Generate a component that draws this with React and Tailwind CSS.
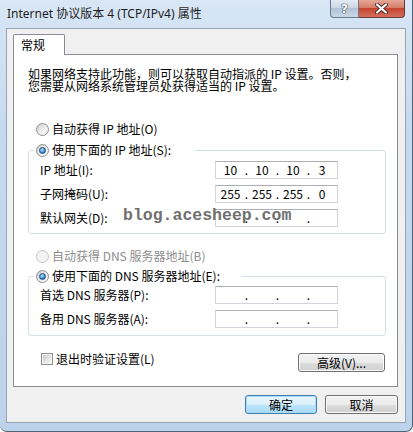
import React from 'react';

function Radio({ checked, disabled }) {
  return (
    <span
      className={`w-[13px] h-[13px] rounded-full border flex items-center justify-center shrink-0 ${
        disabled
          ? 'border-[#c5c5c5] bg-[#f4f4f4]'
          : 'border-[#8e8f8f] bg-[linear-gradient(135deg,#cfcfcf_0%,#f0f0f0_60%,#ffffff_100%)]'
      }`}
    >
      {checked && (
        <span className="w-[7px] h-[7px] rounded-full border border-[#1d4e7e] bg-[radial-gradient(circle_at_40%_35%,#bfe6ff_0%,#3d94dc_55%,#174f88_100%)]" />
      )}
    </span>
  );
}

function IpField({ parts = ['', '', '', ''] }) {
  return (
    <div className="w-[123px] h-[18px] border border-[#d2d6dc] border-t-[#abadb3] bg-white flex items-center pl-[2px] text-[12px] leading-[14px] text-black">
      <span className="w-[25px] text-center">{parts[0]}</span>
      <span className="w-[7px] text-center">.</span>
      <span className="w-[24px] text-center">{parts[1]}</span>
      <span className="w-[7px] text-center">.</span>
      <span className="w-[24px] text-center">{parts[2]}</span>
      <span className="w-[7px] text-center">.</span>
      <span className="w-[20px] text-center">{parts[3]}</span>
    </div>
  );
}

function FieldRow({ label, parts }) {
  return (
    <div className="flex items-center">
      <span className="w-[175px] leading-[14px]">{label}</span>
      <IpField parts={parts} />
    </div>
  );
}

function WinButton({ children, primary, className = '' }) {
  return (
    <div
      className={`h-[19px] rounded-[3px] border flex items-center justify-center text-[12px] leading-[14px] text-black ${
        primary
          ? 'border-[#3c7fb1] shadow-[inset_0_0_0_1px_#a8dcf6] bg-[linear-gradient(180deg,#eaf6fd_0%,#d9f0fc_50%,#bee6fd_51%,#a7d9f5_100%)]'
          : 'border-[#707070] shadow-[inset_0_0_0_1px_#fbfbfb] bg-[linear-gradient(180deg,#f2f2f2_0%,#ebebeb_50%,#dddddd_51%,#cfcfcf_100%)]'
      } ${className}`}
    >
      {children}
    </div>
  );
}

export default function App() {
  return (
    <div className="w-[413px] h-[432px] flex flex-col border-r border-b border-[#4e6378] rounded-b-[7px] bg-[linear-gradient(180deg,#d8e6f5_0%,#c6daef_30%,#bcd3eb_100%)] font-['Noto_Sans_CJK_SC',sans-serif] text-[12px] text-black">
      {/* title bar */}
      <div className="h-[28px] flex items-start">
        <div className="flex-1 pl-[7px] pt-[6px] leading-[16px] font-['Noto_Sans','Noto_Sans_CJK_SC',sans-serif] text-[12px] text-[#1e1e1e]">
          Internet 协议版本 4 (TCP/IPv4) 属性
        </div>
        <div className="flex mr-[7px]">
          <div className="w-[29px] h-[18px] rounded-bl-[4px] border border-t-0 border-[#6b7a8c] bg-[linear-gradient(180deg,#e4ebf3_0%,#cbd7e4_45%,#b2c3d6_50%,#c9d8e8_100%)] flex items-center justify-center">
            <span className="font-['DejaVu_Sans',sans-serif] font-bold text-[12px] leading-[14px] text-white [text-shadow:0_0_1px_#34404e,0_0_1px_#34404e,0_0_1px_#34404e]">?</span>
          </div>
          <div className="w-[46px] h-[18px] rounded-br-[4px] border border-l-0 border-t-0 border-[#6b3a34] bg-[linear-gradient(180deg,#e6a898_0%,#d77b68_45%,#c44430_50%,#d5705c_100%)] flex items-center justify-center">
            <svg width="13" height="11" viewBox="0 0 13 11">
              <path d="M2 1.5 L11 9.5 M11 1.5 L2 9.5" stroke="#4b2a26" strokeWidth="4" strokeLinecap="round" />
              <path d="M2 1.5 L11 9.5 M11 1.5 L2 9.5" stroke="#ffffff" strokeWidth="2.2" strokeLinecap="round" />
            </svg>
          </div>
        </div>
      </div>

      {/* client area */}
      <div className="mx-[6px] h-[395px] border border-[#96a4b3] bg-[#f0f0f0] flex flex-col">
        {/* tab */}
        <div className="pt-[5px] pl-[6px] flex">
          <div className="relative z-10 -mb-[1px] w-[52px] h-[21px] border border-b-0 border-[#898c95] rounded-t-[2px] bg-white pl-[7px] pt-[2px] leading-[16px]">
            常规
          </div>
        </div>

        {/* panel */}
        <div className="relative ml-[6px] mr-[7px] h-[333px] border border-[#898c95] bg-white flex flex-col">
          <div className="pt-[13px] pl-[14px] leading-[12px]">
            <div>如果网络支持此功能，则可以获取自动指派的 IP 设置。否则，</div>
            <div>您需要从网络系统管理员处获得适当的 IP 设置。</div>
          </div>

          <div className="mt-[30px] ml-[22px] h-[14px] flex items-center gap-[3px] leading-[14px]">
            <Radio />
            <span>自动获得 IP 地址(O)</span>
          </div>

          <div className="mt-[14px] ml-[14px] w-[358px] border border-[#d5dfe5] rounded-[3px] flex flex-col pl-[11px] pb-[6px]">
            <div className="-mt-[8px] -ml-[6px] self-start h-[14px] bg-white pl-[2px] pr-[24px] flex items-center gap-[3px] leading-[14px]">
              <Radio checked />
              <span>使用下面的 IP 地址(S):</span>
            </div>
            <div className="mt-[4px] flex flex-col gap-[6px]">
              <FieldRow label="IP 地址(I):" parts={['10', '10', '10', '3']} />
              <FieldRow label="子网掩码(U):" parts={['255', '255', '255', '0']} />
              <FieldRow label="默认网关(D):" />
            </div>
          </div>

          <div className="mt-[15px] ml-[22px] h-[14px] flex items-center gap-[3px] leading-[14px] text-[#8d8d8d]">
            <Radio disabled />
            <span>自动获得 DNS 服务器地址(B)</span>
          </div>

          <div className="mt-[13px] ml-[14px] w-[358px] border border-[#d5dfe5] rounded-[3px] flex flex-col pl-[11px] pb-[7px]">
            <div className="-mt-[8px] -ml-[6px] self-start h-[14px] bg-white pl-[2px] pr-[22px] flex items-center gap-[3px] leading-[14px]">
              <Radio checked />
              <span>使用下面的 DNS 服务器地址(E):</span>
            </div>
            <div className="mt-[3px] flex flex-col gap-[6px]">
              <FieldRow label="首选 DNS 服务器(P):" />
              <FieldRow label="备用 DNS 服务器(A):" />
            </div>
          </div>

          <div className="mt-[17px] flex items-start">
            <div className="ml-[27px] mt-[-1px] flex items-center gap-[3px] leading-[14px]">
              <span className="w-[12px] h-[12px] border border-[#8f8f8f] bg-[#f4f4f4] flex items-center justify-center">
                <span className="w-[8px] h-[8px] bg-[linear-gradient(135deg,#cbcbcb_0%,#e6e6e6_60%,#f6f6f6_100%)]" />
              </span>
              <span>退出时验证设置(L)</span>
            </div>
            <WinButton className="ml-auto mr-[12px] w-[87px]">高级(V)...</WinButton>
          </div>

          {/* watermark */}
          <div className="absolute left-[109px] top-[151px] leading-[20px] text-[16.5px] font-['Liberation_Mono',monospace] font-bold text-[#6f6f6f]">
            blog.acesheep.com
          </div>
        </div>

        {/* bottom buttons */}
        <div className="mt-[8px] mr-[7px] flex justify-end gap-[8px]">
          <WinButton primary className="w-[72px]">确定</WinButton>
          <WinButton className="w-[73px]">取消</WinButton>
        </div>
      </div>
    </div>
  );
}
